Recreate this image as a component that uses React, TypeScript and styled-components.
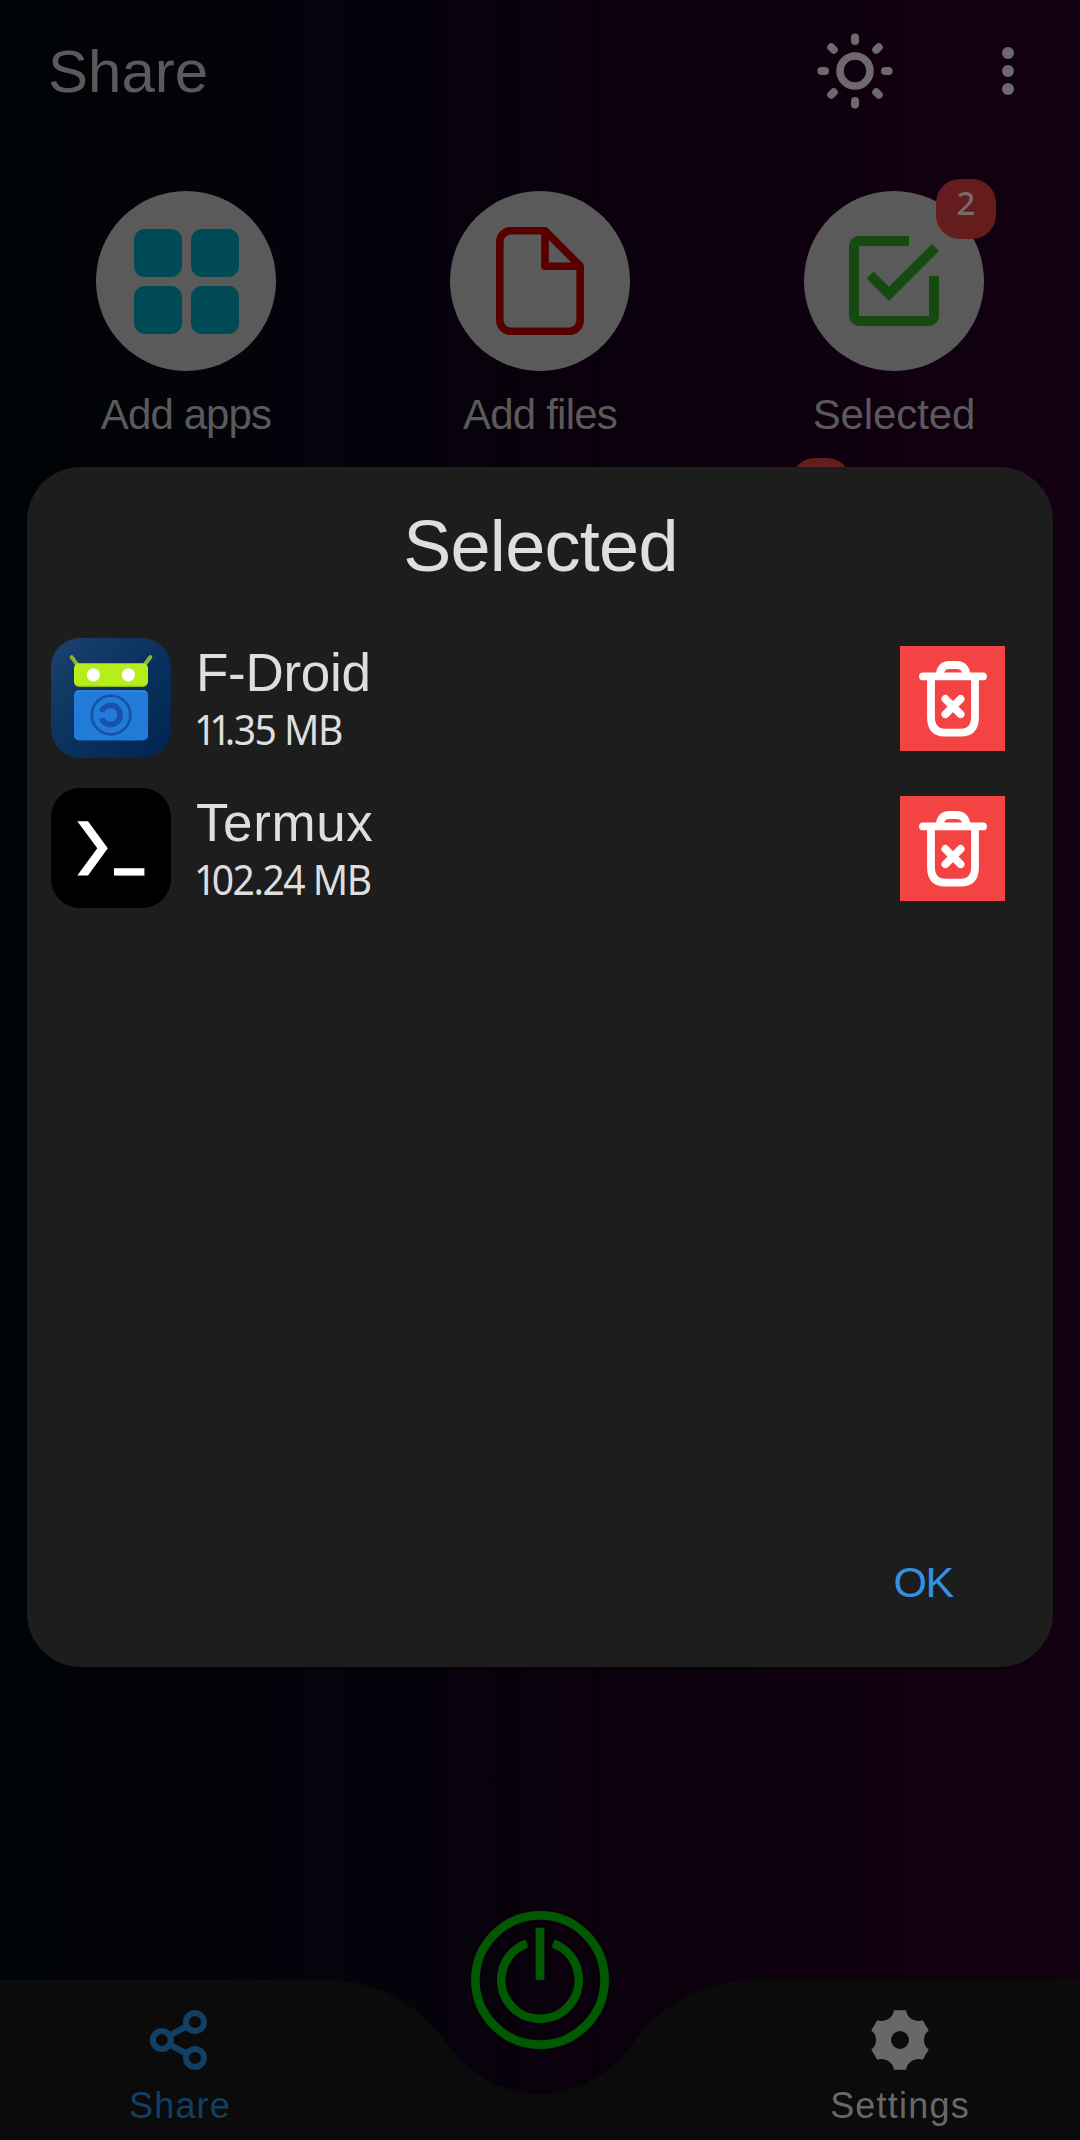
import React from "react";
import styled, { createGlobalStyle } from "styled-components";

const sans = '"Liberation Sans", Arial, sans-serif';
const humanist = '"Noto Sans", "Open Sans", sans-serif';

const GlobalStyle = createGlobalStyle`
  *, *::before, *::after { box-sizing: border-box; }
  body { margin: 0; background: #000; font-family: ${sans}; }
  button { border: 0; padding: 0; background: none; font: inherit; color: inherit; }
  svg { display: block; }
`;

const Screen = styled.div`
  position: relative;
  display: flex;
  flex-direction: column;
  width: 1080px;
  height: 2140px;
  overflow: hidden;
  color: #5a5a5a;
  background: linear-gradient(90deg, #000406 0%, #030309 18%, #06020c 40%, #0b000d 58%, #110010 85%, #130010 100%);
`;

const Header = styled.header`
  display: flex;
  align-items: center;
  height: 142px;
  padding: 0 48px;
`;

const PageTitle = styled.h1`
  flex: 1;
  margin: 0;
  padding-top: 1px;
  font-size: 60px;
  font-weight: 400;
  line-height: 72px;
`;

const HeaderActions = styled.div`
  display: flex;
  gap: 90px;
  margin-right: 6px;
  color: #6d696d;
`;

const IconButton = styled.button`
  display: grid;
  place-items: center;
  width: 90px;
  height: 90px;
  & + & { width: 36px; }
`;

const Actions = styled.section`
  display: flex;
  padding: 49px 9px 0;
`;

const Action = styled.div`
  display: flex;
  flex: 1;
  flex-direction: column;
  align-items: center;
  gap: 20px;
`;

const ActionCircle = styled.div<{ $color: string }>`
  position: relative;
  display: grid;
  place-items: center;
  width: 180px;
  height: 180px;
  border-radius: 50%;
  background: #5a5a5a;
  color: ${(p) => p.$color};
`;

const ActionLabel = styled.span<{ $tracking: number }>`
  font-size: 42px;
  line-height: 48px;
  letter-spacing: ${(p) => p.$tracking}px;
`;

const TileGrid = styled.div`
  display: grid;
  grid-template-columns: 48px 48px;
  gap: 9px;
`;

const Tile = styled.i`
  height: 48px;
  border-radius: 11px;
  background: currentColor;
`;

const Badge = styled.span<{ $left: number; $top: number }>`
  position: absolute;
  left: ${(p) => p.$left}px;
  top: ${(p) => p.$top}px;
  width: 60px;
  height: 60px;
  border-radius: 24px;
  background: #641c1c;
  color: #766c6c;
  font: 500 33px/48px ${humanist};
  text-align: center;
`;

const Dialog = styled.section`
  position: absolute;
  left: 27px;
  top: 467px;
  display: flex;
  flex-direction: column;
  width: 1026px;
  height: 1200px;
  padding: 39px 24px 58px;
  border-radius: 54px;
  background: #1d1d1d;
  color: #dedede;
`;

const DialogTitle = styled.h2`
  margin: 0 0 52px;
  padding-left: 1px;
  font-size: 72px;
  font-weight: 400;
  line-height: 80px;
  letter-spacing: -0.7px;
  text-align: center;
`;

const AppList = styled.ul`
  display: flex;
  flex: 1;
  flex-direction: column;
  gap: 30px;
  margin: 0;
  padding: 0;
  list-style: none;
`;

const AppRow = styled.li`
  display: flex;
  align-items: center;
  height: 120px;
  padding-right: 24px;
`;

const AppText = styled.div`
  display: flex;
  flex: 1;
  flex-direction: column;
  align-items: flex-start;
  padding: 3px 0 0 25px;
`;

const AppName = styled.span<{ $tracking: number }>`
  font-size: 53px;
  line-height: 58px;
  letter-spacing: ${(p) => p.$tracking}px;
`;

const AppSize = styled.span`
  margin-left: -2px;
  font: 400 42px/54px ${humanist};
  letter-spacing: -1.6px;
  transform: scaleX(0.93);
  transform-origin: left;
  white-space: pre;
`;

const NarrowOne = styled.span<{ $tracking: number }>`
  letter-spacing: ${(p) => p.$tracking}px;
`;

const DeleteButton = styled.button`
  width: 105px;
  height: 105px;
  background: #f44343;
  color: #fff;
`;

const DialogFooter = styled.footer`
  display: flex;
  justify-content: flex-end;
  padding-right: 76px;
`;

const OkButton = styled.button`
  color: #3292e0;
  font-size: 43px;
  line-height: 54px;
  letter-spacing: -1.3px;
`;

const BottomNav = styled.nav`
  position: relative;
  display: grid;
  grid-template-columns: repeat(3, 1fr);
  height: 160px;
  margin-top: auto;
`;

const NavShape = styled.svg`
  position: absolute;
  inset: 0;
`;

const NavItem = styled.div<{ $color: string }>`
  position: relative;
  display: flex;
  flex-direction: column;
  align-items: center;
  gap: 16px;
  padding-top: 30px;
  color: ${(p) => p.$color};
  font-size: 36px;
  line-height: 40px;
  letter-spacing: 1.2px;
`;

const PowerButton = styled.button`
  position: relative;
  justify-self: center;
  width: 138px;
  height: 138px;
  margin-top: -69px;
`;

const SunIcon = () => (
  <svg width="90" height="90" viewBox="-45 -45 90 90" fill="none" stroke="currentColor">
    <circle r="15" strokeWidth="7.6" />
    {[0, 45, 90, 135, 180, 225, 270, 315].map((a) => (
      <line key={a} y1="-30" y2="-33.6" strokeWidth="8" strokeLinecap="round" transform={`rotate(${a})`} />
    ))}
  </svg>
);

const MoreIcon = () => (
  <svg width="12" height="48" viewBox="0 0 12 48" fill="currentColor">
    <circle cx="6" cy="6" r="6" />
    <circle cx="6" cy="24" r="6" />
    <circle cx="6" cy="42" r="6" />
  </svg>
);

const FileIcon = () => (
  <svg width="88" height="108" viewBox="0 0 88 108" fill="none" stroke="currentColor" strokeWidth="7.6" strokeLinejoin="round">
    <path d="M49 3.8H14.8a11 11 0 0 0-11 11v78.4a11 11 0 0 0 11 11h58.4a11 11 0 0 0 11-11V39Z" />
    <path d="M49 3.8V39.2H84.2" />
  </svg>
);

const CheckIcon = () => (
  <svg width="90" height="90" viewBox="3 3 18 18" fill="currentColor">
    <path d="M19 19H5V5h10V3H5a2 2 0 0 0-2 2v14a2 2 0 0 0 2 2h14a2 2 0 0 0 2-2v-8h-2v8Z" />
    <path d="M7.91 10.08 6.5 11.5 11 16 21 6l-1.41-1.42L11 13.17Z" />
  </svg>
);

const TrashIcon = () => (
  <svg width="105" height="105" viewBox="0 0 105 105" fill="none" stroke="currentColor" strokeWidth="7.8" strokeLinecap="round" strokeLinejoin="round">
    <path d="M23 30.4H83" />
    <path d="M39.8 30C39.8 22 44 19 49 19H57C62 19 66.4 22 66.4 30" />
    <path d="M31 31V71Q31 86.6 45 86.6H61Q75 86.6 75 71V31" />
    <path d="M45.4 53 60.6 68.2M60.6 53 45.4 68.2" />
  </svg>
);

const FDroidIcon = () => (
  <svg width="120" height="120" viewBox="0 0 120 120">
    <defs>
      <linearGradient id="fdroid-bg" x1="0" y1="0" x2="1" y2="1">
        <stop offset="0" stopColor="#1b426e" />
        <stop offset="0.6" stopColor="#082f5c" />
        <stop offset="1" stopColor="#002450" />
      </linearGradient>
    </defs>
    <rect width="120" height="120" rx="29" fill="url(#fdroid-bg)" />
    <path d="M20.6 19 28 29M99.4 19 92 29" stroke="#8ab635" strokeWidth="3.8" strokeLinecap="round" />
    <rect x="23" y="26" width="74" height="23" rx="5" fill="#8fbe20" />
    <rect x="23" y="25.3" width="74" height="22.4" rx="5" fill="#b6ee1c" />
    <circle cx="42.4" cy="36.8" r="6.6" fill="#fff" />
    <circle cx="77.4" cy="36.8" r="6.6" fill="#fff" />
    <rect x="23" y="52.3" width="74" height="50" rx="5" fill="#4093e2" />
    <rect x="23" y="53.5" width="74" height="48.8" rx="5" fill="#207cd8" />
    <circle cx="60" cy="77" r="19.3" fill="none" stroke="#1751aa" strokeWidth="2.6" />
    <path d="M50.6 73.8A9.6 9.6 0 1 1 50.6 80.2" fill="none" stroke="#1751aa" strokeWidth="5.6" />
  </svg>
);

const TermuxIcon = () => (
  <svg width="120" height="120" viewBox="0 0 120 120" fill="#fff">
    <rect width="120" height="120" rx="29" fill="#000" />
    <path d="M26.3 33.3H37L56.8 60.3 37 87.4H26.3L46.3 60.3Z" />
    <path d="M63 80.2H93.4V87.6H63Z" />
  </svg>
);

const ShareIcon = () => (
  <svg width="60" height="60" viewBox="0 0 60 60" fill="none" stroke="currentColor" strokeWidth="6">
    <circle cx="11.8" cy="30" r="9" />
    <circle cx="45" cy="12" r="9" />
    <circle cx="45" cy="48" r="9" />
    <path d="M19.5 25.6 37.2 16M19.5 34.4 37.2 44" />
  </svg>
);

const gearPath = (() => {
  const point = (deg: number) => {
    const rad = (deg * Math.PI) / 180;
    return `${(30.3 * Math.cos(rad)).toFixed(2)} ${(30.3 * Math.sin(rad)).toFixed(2)}`;
  };
  const notch = "A12 12 0 0 0";
  const teeth = [30, 90, 150, 210, 270, 330]
    .map((a) => `${point(a - 11.5)} L ${point(a + 11.5)}`)
    .join(` ${notch} `);
  return `M ${teeth} ${notch} ${point(18.5)} Z M9 0 A9 9 0 1 0 -9 0 A9 9 0 1 0 9 0 Z`;
})();

const GearIcon = () => (
  <svg width="60" height="60" viewBox="-30 -30 60 60" fill="currentColor">
    <path fillRule="evenodd" d={gearPath} />
  </svg>
);

const PowerIcon = () => (
  <svg width="138" height="138" viewBox="-69 -69 138 138" fill="none" stroke="#005800" strokeWidth="8.7">
    <circle r="64.6" />
    <path d="M-13.2-36.5A38.8 38.8 0 1 0 13.2-36.5" />
    <path d="M0-52.3V0" />
  </svg>
);

const apps = [
  { name: "F-Droid", size: "11.35 MB", icon: <FDroidIcon />, tracking: -0.3 },
  { name: "Termux", size: "102.24 MB", icon: <TermuxIcon />, tracking: 0.6 },
];

const FileSize = ({ value }: { value: string }) => {
  const [, ones, rest] = value.match(/^(1*)(.*)$/)!;
  return (
    <AppSize>
      <NarrowOne $tracking={ones.length > 1 ? -7.5 : -5}>{ones}</NarrowOne>
      {rest}
    </AppSize>
  );
};

export default function App() {
  return (
    <>
      <GlobalStyle />
      <Screen>
        <Header>
          <PageTitle>Share</PageTitle>
          <HeaderActions>
            <IconButton aria-label="Theme"><SunIcon /></IconButton>
            <IconButton aria-label="More"><MoreIcon /></IconButton>
          </HeaderActions>
        </Header>
        <Actions>
          <Action>
            <ActionCircle $color="#004a55">
              <TileGrid><Tile /><Tile /><Tile /><Tile /></TileGrid>
            </ActionCircle>
            <ActionLabel $tracking={-0.9}>Add apps</ActionLabel>
          </Action>
          <Action>
            <ActionCircle $color="#580000"><FileIcon /></ActionCircle>
            <ActionLabel $tracking={-0.8}>Add files</ActionLabel>
          </Action>
          <Action>
            <ActionCircle $color="#154a10">
              <CheckIcon />
              <Badge $left={132} $top={-12}>2</Badge>
            </ActionCircle>
            <ActionLabel $tracking={-0.1}>Selected</ActionLabel>
          </Action>
        </Actions>
        <Badge $left={791} $top={458} />
        <BottomNav>
          <NavShape width="1080" height="160" viewBox="0 0 1080 160">
            <path fill="#0b0b0b" d="M0 0H327C378 0 420 27 443 58C466 92 502 114 540 114S614 92 637 58C660 27 702 0 753 0H1080V160H0Z" />
          </NavShape>
          <NavItem $color="#123f64"><ShareIcon />Share</NavItem>
          <PowerButton aria-label="Power"><PowerIcon /></PowerButton>
          <NavItem $color="#686868"><GearIcon />Settings</NavItem>
        </BottomNav>
        <Dialog role="dialog">
          <DialogTitle>Selected</DialogTitle>
          <AppList>
            {apps.map((app) => (
              <AppRow key={app.name}>
                {app.icon}
                <AppText>
                  <AppName $tracking={app.tracking}>{app.name}</AppName>
                  <FileSize value={app.size} />
                </AppText>
                <DeleteButton aria-label="Remove"><TrashIcon /></DeleteButton>
              </AppRow>
            ))}
          </AppList>
          <DialogFooter><OkButton>OK</OkButton></DialogFooter>
        </Dialog>
      </Screen>
    </>
  );
}
